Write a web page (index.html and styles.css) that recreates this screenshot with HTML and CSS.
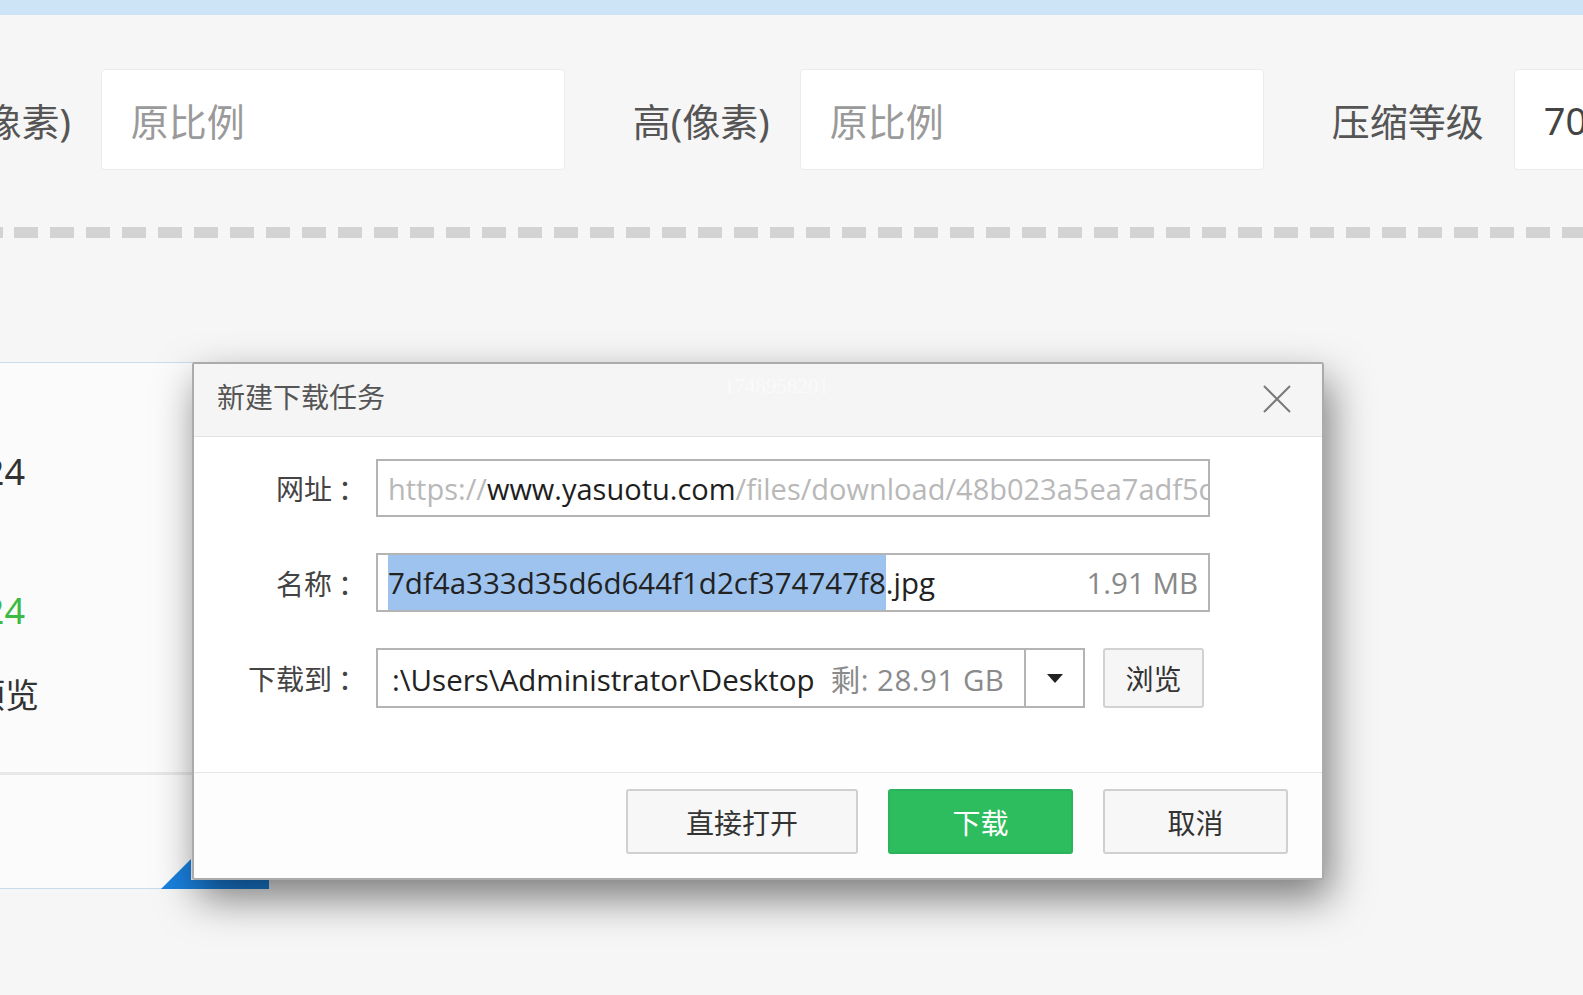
FILE: index.html
```html
<!DOCTYPE html>
<html lang="zh-CN">
<head>
    <meta charset="UTF-8">
    <meta name="viewport" content="width=device-width, initial-scale=1.0">
    <title>新建下载任务</title>
    <link rel="stylesheet" href="styles.css">
</head>
<body>
    <div class="topbar"></div>

    <div class="params">
        <div class="param">
            <span class="param-label">宽(像素)</span>
            <div class="param-input placeholder">原比例</div>
        </div>
        <div class="param">
            <span class="param-label">高(像素)</span>
            <div class="param-input placeholder">原比例</div>
        </div>
        <div class="param">
            <span class="param-label">压缩等级</span>
            <div class="param-input">70</div>
        </div>
    </div>

    <div class="dash"></div>

    <div class="result">
        <div class="result-info">
            <div class="info-line first">1024</div>
            <div class="info-line second green">1024</div>
            <div class="info-line third preview">预览</div>
        </div>
        <div class="result-foot"></div>
        <svg class="result-tab" width="108" height="30" viewBox="0 0 108 30">
            <polygon points="0,30 30,0 30,21 108,21 108,30" fill="#1a80de"/>
        </svg>
    </div>

    <!-- ventana de descarga -->
    <div class="dialog">
        <div class="dialog-title">
            <span>新建下载任务</span>
            <span class="watermark">1748958201</span>
            <svg class="dialog-close" width="30" height="30" viewBox="0 0 30 30">
                <path d="M2 2 L28 28 M28 2 L2 28" stroke="#7a7a7a" stroke-width="2" fill="none"/>
            </svg>
        </div>

        <div class="dialog-body">
            <div class="form-row">
                <label class="form-label">网址<span class="colon">：</span></label>
                <div class="field url-field">
                    <span class="muted">https://</span><span class="strong">www.yasuotu.com</span><span class="muted">/files/download/48b023a5ea7adf5c</span>
                </div>
            </div>

            <div class="form-row">
                <label class="form-label">名称<span class="colon">：</span></label>
                <div class="field name-field">
                    <span class="name-text"><span class="selected">7df4a333d35d6d644f1d2cf374747f8</span>.jpg</span>
                    <span class="size">1.91 MB</span>
                </div>
            </div>

            <div class="form-row">
                <label class="form-label">下载到<span class="colon">：</span></label>
                <div class="field path-field">
                    <span class="path-text">:\Users\Administrator\Desktop<span class="free">剩: 28.91 GB</span></span>
                    <span class="path-drop">
                        <svg width="16" height="9" viewBox="0 0 16 9"><polygon points="0,0 16,0 8,9" fill="#222"/></svg>
                    </span>
                </div>
                <button class="browse-button">浏览</button>
            </div>
        </div>

        <div class="dialog-footer">
            <button class="btn">直接打开</button>
            <button class="btn btn-green">下载</button>
            <button class="btn">取消</button>
        </div>
    </div>
</body>
</html>
```

FILE: styles.css
```css
body {
    margin: 0;
    width: 1583px;
    height: 995px;
    overflow: hidden;
    position: relative;
    background-color: #f6f6f6;
    font-family: 'Noto Sans', 'Noto Sans CJK SC', sans-serif;
    color: #444;
}

.topbar {
    height: 15px;
    background-color: #cde4f6;
}

.params {
    display: flex;
    gap: 68px;
    margin-top: 54px;
    margin-left: -66px;
    height: 101px;
}
.param {
    display: flex;
    align-items: center;
    gap: 30px;
    flex-shrink: 0;
}
.param-label {
    font-size: 38px;
    color: #555;
    white-space: nowrap;
}
.param-input {
    width: 464px;
    height: 101px;
    box-sizing: border-box;
    padding-left: 29px;
    background-color: white;
    border: 1px solid #ececec;
    border-radius: 4px;
    display: flex;
    align-items: center;
    font-size: 38px;
    color: #444;
}
.param-input.placeholder {
    color: #9a9a9a;
}

.dash {
    margin-top: 57px;
    height: 11px;
    background: repeating-linear-gradient(to right, #d3d3d3 0, #d3d3d3 24px, transparent 24px, transparent 36px);
    background-position: 14px 0;
}

.result {
    position: relative;
    margin-top: 124px;
    margin-left: -2px;
    width: 270px;
    height: 527px;
    box-sizing: border-box;
    background-color: #fbfbfc;
    border: 1px solid #c8dcec;
    border-right: none;
    display: flex;
    flex-direction: column;
}
.result-info {
    margin-left: -100px;
    width: 126px;
    text-align: right;
    font-size: 36px;
    color: #333;
}
.info-line {
    height: 40px;
    line-height: 40px;
    white-space: nowrap;
}
.info-line.first { margin-top: 89px; }
.info-line.second { margin-top: 99px; }
.info-line.third { margin-top: 44px; }
.info-line.green { color: #3dba43; }
.info-line.preview {
    margin-right: -14px;
    font-size: 34px;
}
.result-foot {
    margin-top: 57px;
    border-top: 3px solid #e8e8e8;
    flex: 1;
}
.result-tab {
    position: absolute;
    left: 162px;
    bottom: -1px;
}

.dialog {
    position: absolute;
    left: 192px;
    top: 362px;
    width: 1132px;
    height: 518px;
    box-sizing: border-box;
    background-color: white;
    border: 2px solid #ababab;
    border-radius: 3px;
    box-shadow: 6px 18px 42px rgba(0,0,0,0.5);
    display: flex;
    flex-direction: column;
}
.dialog-title {
    position: relative;
    height: 73px;
    box-sizing: border-box;
    padding: 0 30px 8px 23px;
    background-color: #f5f5f5;
    border-bottom: 1px solid #e2e2e2;
    display: flex;
    align-items: center;
    justify-content: space-between;
    font-size: 28px;
    color: #555;
}
.watermark {
    position: absolute;
    left: 530px;
    top: 10px;
    font-family: 'Liberation Serif', serif;
    font-size: 21px;
    color: #fafafa;
}
.dialog-close {
    margin-top: 6px;
}

.dialog-body {
    padding: 22px 0 64px 0;
    display: flex;
    flex-direction: column;
    gap: 36px;
}
.form-row {
    display: flex;
    align-items: center;
}
.form-label {
    width: 166px;
    margin-right: 16px;
    text-align: right;
    font-size: 28px;
    color: #444;
}
.colon {
    display: inline-block;
    width: 22px;
    padding-left: 6px;
    text-align: left;
}
.field {
    height: 58px;
    box-sizing: border-box;
    border: 2px solid #b4b4b4;
    background-color: white;
    display: flex;
    align-items: center;
    overflow: hidden;
    white-space: nowrap;
    font-family: 'Open Sans', 'Noto Sans CJK SC', sans-serif;
    font-size: 29.5px;
    color: #222;
}
.url-field {
    width: 834px;
    padding-left: 10px;
    font-size: 29px;
}
.muted {
    color: #b8b8b8;
}
.strong {
    color: #1e1e1e;
}
.name-field {
    width: 834px;
    height: 59px;
    padding: 0 10px;
    justify-content: space-between;
}
.selected {
    background-color: #9dc3ee;
    padding: 9px 0;
}
.size {
    color: #888;
}
.path-field {
    width: 709px;
    height: 60px;
    padding-left: 14px;
    justify-content: space-between;
}
.path-text {
    overflow: hidden;
}
.free {
    margin-left: 16px;
    letter-spacing: 0.5px;
    color: #8a8a8a;
}
.path-drop {
    flex-shrink: 0;
    width: 57px;
    height: 100%;
    border-left: 2px solid #b4b4b4;
    display: flex;
    align-items: center;
    justify-content: center;
}
.browse-button {
    margin-left: 18px;
    width: 101px;
    height: 60px;
    background-color: #f6f6f6;
    border: 2px solid #d2d2d2;
    border-radius: 3px;
    font-family: 'Noto Sans CJK SC', sans-serif;
    font-size: 28px;
    color: #333;
    padding: 0;
}

.dialog-footer {
    flex: 1;
    border-top: 1px solid #e6e6e6;
    background-color: #fdfdfd;
    display: flex;
    justify-content: flex-end;
    align-items: flex-start;
    gap: 30px;
    padding: 16px 34px 0 0;
}
.btn {
    width: 185px;
    height: 65px;
    background-color: #f7f7f7;
    border: 2px solid #d0d0d0;
    border-radius: 3px;
    font-family: 'Noto Sans CJK SC', sans-serif;
    font-size: 28px;
    color: #333;
    padding: 0;
}
.btn:first-child {
    width: 232px;
}
.btn-green {
    background-color: #2dbd5e;
    border-color: #2ab35a;
    color: white;
}
```
